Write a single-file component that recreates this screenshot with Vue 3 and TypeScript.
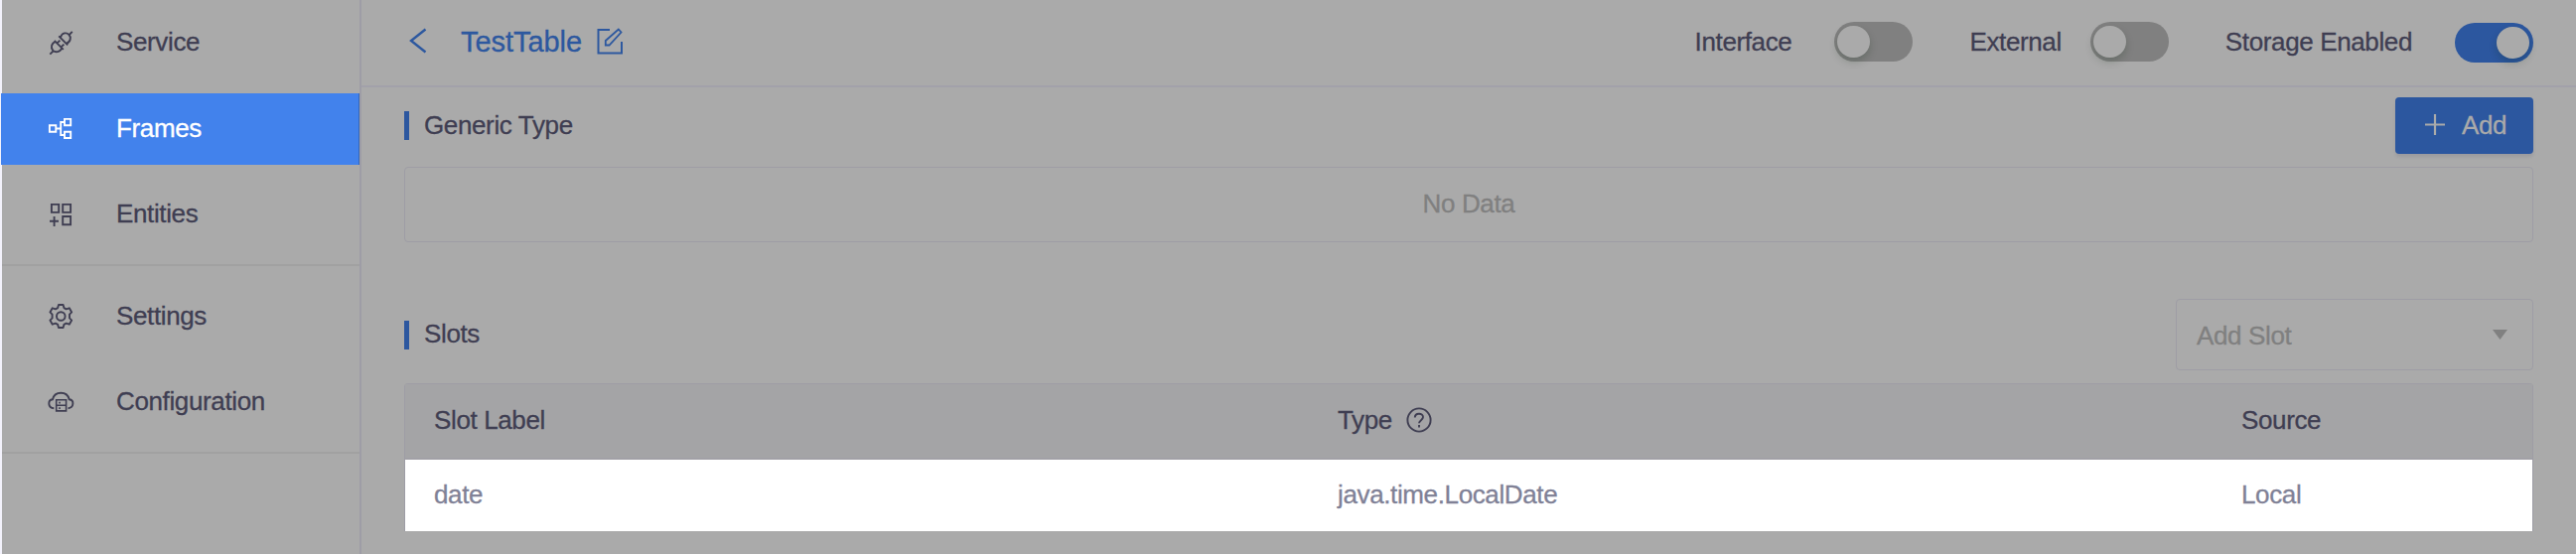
<script setup lang="ts">
interface NavItem {
  label: string
  icon: 'service' | 'frames' | 'entities' | 'settings' | 'config'
  active?: boolean
}

const groups: NavItem[][] = [
  [
    { label: 'Service', icon: 'service' },
    { label: 'Frames', icon: 'frames', active: true },
    { label: 'Entities', icon: 'entities' },
  ],
  [
    { label: 'Settings', icon: 'settings' },
    { label: 'Configuration', icon: 'config' },
  ],
]

const toggles = [
  { label: 'Interface', on: false, key: 'interface' },
  { label: 'External', on: false, key: 'external' },
  { label: 'Storage Enabled', on: true, key: 'storage' },
]

const slots = [{ label: 'date', type: 'java.time.LocalDate', source: 'Local' }]
</script>

<template>
  <div class="page">
    <aside class="sidebar">
      <nav v-for="(group, g) in groups" :key="g" class="group" :class="'group-' + g">
        <a v-for="item in group" :key="item.label" class="item" :class="{ active: item.active }">
          <svg class="nav-icon" viewBox="0 0 28 28" fill="none" stroke="currentColor" stroke-width="1.9">
            <g v-if="item.icon === 'service'">
              <path d="M22.200 6.500l3.600-3.600M3.300 25.700l3.600-3.600" />
              <path d="M12.200 7.300l9 9M14 8.500c1.500-5 6.500-5 8.400-2.500c2.200 2 2.200 7-2.600 8.800M7.800 11.800l9 9M9.300 12.800c-5 1.500-5.300 6.500-3 9c2.200 2.200 7.300 2.200 9-2.600M10.800 14.200l2.600-2.600M14.800 18.200l2.600-2.600" />
            </g>
            <g v-else-if="item.icon === 'frames'">
              <path d="M2.900 10.300h6.400v6.400H2.900zM18 3.900h6.200v6.300H18zM18 16.700h6.200v6.300H18zM9.300 13.500h4.800M18 7h-3.800v13H18" />
            </g>
            <g v-else-if="item.icon === 'entities'">
              <path d="M4.900 3.900h7.300v8H4.900zM16.200 3.900h7.900v8h-7.900zM16.200 16h7.900v8.200h-7.900zM3 20.700h9M7.600 16v10" />
            </g>
            <g v-else-if="item.icon === 'settings'">
              <circle cx="14.300" cy="13.500" r="4.300" />
              <path d="M12 2h4.600l.8 3.100l2.300 1.300l3.100-1.100l2.400 4.100l-2.200 2.200v3.800l2.200 2.200l-2.400 4.100l-3.100-1.100l-2.300 1.300l-.8 3.100h-4.600l-.8-3.100l-2.300-1.300l-3.100 1.100l-2.400-4.100l2.200-2.200v-3.800l-2.200-2.200l2.400-4.100l3.100 1.100l2.300-1.300z" stroke-linejoin="round" />
            </g>
            <g v-else>
              <path d="M7.300 20.200C1 19.800.8 12 6 11.300C8 2.600 20.700 2.600 22.700 11.300c5.200.7 5 8.300-1.200 8.900" />
              <path d="M9.700 11.700h9.900v11.200H9.700zM9.700 17.300h9.900M13 13.700v1.700M13 19.300v1.700" stroke-width="1.600" />
            </g>
          </svg>
          <span class="nav-label">{{ item.label }}</span>
        </a>
      </nav>
    </aside>

    <main class="main">
      <header class="header">
        <svg class="back" viewBox="0 0 18 26" fill="none" stroke="currentColor" stroke-width="2.400">
          <path d="M16.500 1.500L2 13l14.500 11.500" />
        </svg>
        <h1 class="title">TestTable</h1>
        <svg class="edit" viewBox="0 0 26 27" fill="none" stroke="currentColor" stroke-width="2">
          <path d="M13 2H1.500v23.500h23.500V14" />
          <path d="M8.800 17.500v-4.500L21.800 1.500l2.700 3L12.500 17.500z" stroke-width="1.800" />
        </svg>
        <div class="toggles">
          <div v-for="t in toggles" :key="t.key" class="toggle" :class="'toggle-' + t.key">
            <span class="toggle-label">{{ t.label }}</span>
            <span class="switch" :class="{ on: t.on }"><span class="knob"></span></span>
          </div>
        </div>
      </header>

      <section class="generic">
        <div class="section-head head-generic">
          <h2 class="section-title">Generic Type</h2>
          <button class="add">
            <svg class="plus" viewBox="0 0 20 21" stroke="currentColor" stroke-width="2.200">
              <path d="M10 0v21M0 10.500h20" />
            </svg>
            <span>Add</span>
          </button>
        </div>
        <div class="empty">No Data</div>
      </section>

      <section class="slots">
        <div class="section-head head-slots">
          <h2 class="section-title slots-title">Slots</h2>
          <div class="select">
            <span class="placeholder">Add Slot</span>
            <svg class="caret" viewBox="0 0 15 10"><path d="M0 0h15L7.500 10z" fill="currentColor" /></svg>
          </div>
        </div>
        <div class="table">
          <div class="row thead">
            <span>Slot Label</span>
            <span class="type-head">
              <span class="type-word">Type</span>
              <svg class="help" viewBox="0 0 26 26" fill="none" stroke="currentColor" stroke-width="1.900">
                <circle cx="13" cy="13" r="11.600" />
                <path d="M8.800 10.500c0-5 8.200-5 8.200-.4c0 3-4 3.100-4 6.200M13 18v2.400" />
              </svg>
            </span>
            <span>Source</span>
          </div>
          <div v-for="s in slots" :key="s.label" class="row body-row">
            <span>{{ s.label }}</span>
            <span class="type-cell">{{ s.type }}</span>
            <span>{{ s.source }}</span>
          </div>
        </div>
      </section>
    </main>
  </div>
</template>

<style>
body {
  background: #aaaaaa;
  overflow: hidden;
}
</style>

<style scoped>
.page,
.page * {
  box-sizing: border-box;
}
.page {
  display: flex;
  width: 2594px;
  height: 558px;
  background: #aaaaaa;
  color: #3f3e52;
  font: 26px/30px 'Liberation Sans', Arial, sans-serif;
  letter-spacing: -0.37px;
  -webkit-text-stroke: 0.3px currentColor;
}
.sidebar {
  flex: none;
  width: 364px;
  border-left: 2px solid #f3f2fc;
  border-right: 2px solid #9e9da6;
}
.group {
  display: flex;
  flex-direction: column;
  border-bottom: 2px solid #a1a1a1;
}
.group-0 {
  height: 268px;
  padding-top: 7px;
  gap: 14px;
}
.group-1 {
  height: 189px;
  padding-top: 15px;
  gap: 14px;
}
.item {
  display: flex;
  flex: none;
  align-items: center;
  height: 72px;
  padding-left: 45px;
}
.item.active {
  margin: 1px 0 0 -1px;
  padding-left: 46px;
  background: #4282ec;
  border-right: 1px solid #3566b8;
  color: #ffffff;
}
.nav-icon {
  width: 28px;
  height: 28px;
  margin-right: 42px;
}
.nav-label {
  padding-bottom: 2px;
}
.main {
  flex: 1;
  min-width: 0;
}
.header {
  display: flex;
  align-items: center;
  height: 88px;
  padding: 0 43px 2px 48px;
  border-bottom: 2px solid #a2a1aa;
}
.back {
  width: 18px;
  height: 26px;
  margin-top: -3px;
  color: #2d589f;
}
.title {
  margin: 0 0 0 34px;
  font-size: 29px;
  font-weight: 400;
  line-height: 34px;
  letter-spacing: -0.05px;
  color: #2d589f;
}
.edit {
  width: 26px;
  height: 27px;
  margin: -2px 0 0 15px;
  color: #2d589f;
}
.toggles {
  display: flex;
  align-items: center;
  margin-left: auto;
}
.toggle {
  display: flex;
  align-items: center;
}
.toggle-external,
.toggle-storage {
  margin-left: 57px;
}
.switch {
  width: 79px;
  height: 40px;
  margin-left: 43px;
  padding: 4px 3px;
  border-radius: 20px;
  background: #808080;
}
.toggle-external .switch {
  margin-left: 29px;
}
.switch.on {
  display: flex;
  justify-content: flex-end;
  margin-top: 2px;
  padding: 4px;
  background: #2c579f;
}
.knob {
  display: block;
  width: 33px;
  height: 32px;
  border-radius: 16px;
  background: #aaaaaa;
  box-shadow: 0 4px 8px rgba(0, 35, 11, 0.2);
}
.section-head {
  display: flex;
  justify-content: space-between;
  padding: 0 43px 0 43px;
}
.section-title {
  display: flex;
  align-items: center;
  height: 29px;
  margin: 0;
  padding: 0 0 2px 15px;
  border-left: 5px solid #2c579f;
  font-size: 26px;
  font-weight: 400;
}
.head-generic {
  height: 80px;
  padding-top: 10px;
}
.head-generic .section-title {
  margin-top: 14px;
}
.add {
  display: flex;
  align-items: center;
  width: 139px;
  height: 57px;
  padding: 0 0 2px 30px;
  border: 0;
  border-radius: 4px;
  background: #2c579f;
  color: #aaaaaa;
  font: inherit;
  letter-spacing: inherit;
  box-shadow: 0 3px 3px rgba(60, 60, 90, 0.12);
}
.plus {
  width: 20px;
  height: 21px;
  margin: 0 17px 0 0;
}
.empty {
  display: flex;
  align-items: center;
  justify-content: center;
  height: 76px;
  margin: 0 43px;
  padding-bottom: 2px;
  border: 1px solid #9e9da5;
  border-radius: 4px;
  color: #808080;
}
.slots {
  padding-top: 57px;
}
.head-slots {
  height: 85px;
}
.slots-title {
  margin-top: 22px;
  padding-bottom: 4px;
}
.select {
  display: flex;
  align-items: center;
  justify-content: space-between;
  width: 360px;
  height: 72px;
  padding: 0 25px 0 20px;
  border: 1px solid #9e9da5;
  border-radius: 4px;
  color: #808080;
}
.placeholder {
  padding-top: 2px;
}
.caret {
  width: 15px;
  height: 10px;
}
.table {
  height: 149px;
  margin: 0 43px;
  border: 1px solid #9e9da5;
  border-bottom: 0;
  border-radius: 4px 4px 0 0;
}
.row {
  display: grid;
  grid-template-columns: 910px 910px 1fr;
  align-items: center;
  padding: 0 0 2px 29px;
}
.thead {
  height: 76px;
  border-bottom: 2px solid #a1a0a6;
  background: #a4a4a6;
}
.body-row {
  height: 72px;
  padding-bottom: 3px;
  background: #ffffff;
  color: #808196;
}
.type-head {
  display: flex;
  align-items: center;
}
.help {
  width: 26px;
  height: 26px;
  margin: -1px 0 0 14px;
}
</style>
